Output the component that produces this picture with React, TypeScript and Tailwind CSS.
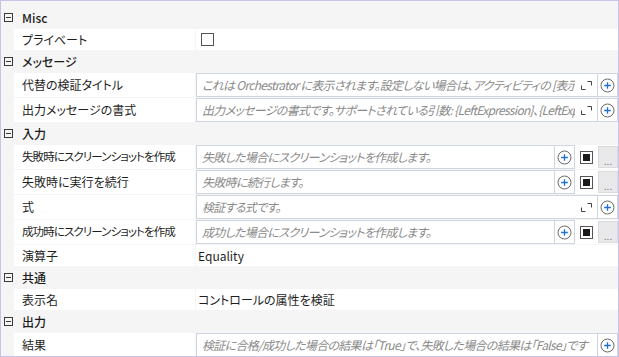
import React from "react";

function Collapse() {
  return (
    <svg width="9" height="9" viewBox="0 0 9 9" className="shrink-0">
      <rect x="0.5" y="0.5" width="8" height="8" fill="none" stroke="#3a3a3a" />
      <path d="M2 4.5H7" stroke="#3a3a3a" />
    </svg>
  );
}

function PlusCircle() {
  return (
    <svg width="15" height="15" viewBox="0 0 15 15">
      <circle cx="7.5" cy="7.5" r="6.5" fill="none" stroke="#6a6a6a" />
      <path d="M7.5 4.2V10.8M4.2 7.5H10.8" stroke="#1f6fd6" strokeWidth="1.3" />
    </svg>
  );
}

function Expand() {
  return (
    <svg width="11" height="9" viewBox="0 0 11 9">
      <path d="M0.5 4.5V8.5H4.5M6.5 0.5H10.5V4.5" fill="none" stroke="#444" />
    </svg>
  );
}

function Category({ title }: { title: string }) {
  return (
    <div className="flex h-[21px] shrink-0 items-center gap-[9px] pl-[3px]">
      <Collapse />
      <span className="font-medium text-[#1b1b1b]">{title}</span>
    </div>
  );
}

function Prop({ label, tall, long, children }: { label: string; tall?: boolean; long?: boolean; children?: React.ReactNode }) {
  return (
    <div className={`flex shrink-0 ${tall ? "h-[24px]" : "h-[21px]"}`}>
      <div
        className={`ml-[13px] flex w-[181px] shrink-0 items-center overflow-hidden whitespace-nowrap bg-white pl-[8px] text-[#1e1e1e] ${long ? "text-[11.5px] tracking-[-0.9px]" : ""}`}
      >
        {label}
      </div>
      <div className="ml-px flex min-w-0 flex-1 items-center bg-white">{children}</div>
    </div>
  );
}

function Hint({ text }: { text: string }) {
  return (
    <div className="min-w-0 flex-1 overflow-hidden whitespace-nowrap pl-[5px] italic tracking-[-0.7px] text-[#8a8a8a]">
      {text}
    </div>
  );
}

function TextBox({ text, expand }: { text: string; expand?: boolean }) {
  return (
    <div className="flex h-full min-w-0 flex-1 items-center border border-[#cfd6df]">
      <Hint text={text} />
      {expand && (
        <div className="flex w-[22px] shrink-0 items-center justify-center">
          <Expand />
        </div>
      )}
      <div className="flex h-full w-[20px] shrink-0 items-center justify-center border-l border-[#cfd6df]">
        <PlusCircle />
      </div>
    </div>
  );
}

function ShotBox({ text }: { text: string }) {
  return (
    <div className="flex h-full flex-1 items-center">
      <TextBox text={text} />
      <div className="mx-[5px] flex h-[13px] w-[13px] shrink-0 items-center justify-center border-[1.5px] border-[#555]">
        <div className="h-[7px] w-[7px] bg-[#1a1a1a]" />
      </div>
      <div className="flex h-[22px] w-[20px] shrink-0 items-end justify-center border border-[#dadada] bg-[#e9e9ec] pb-[1px] text-[10px] leading-[10px] text-[#777]">
        ...
      </div>
    </div>
  );
}

export default function App() {
  return (
    <div className="flex h-[357px] w-[619px] flex-col gap-px overflow-hidden border border-[#c9c2ea] bg-[#f5f5f5] pt-[6px] font-['Noto_Sans_CJK_JP',sans-serif] text-[12px] [font-feature-settings:'palt']">
      <Category title="Misc" />
      <Prop label="プライベート">
        <div className="ml-[5px] h-[13px] w-[13px] border border-[#555]" />
      </Prop>
      <Category title="メッセージ" />
      <Prop label="代替の検証タイトル" tall>
        <TextBox expand text="これは Orchestrator に表示されます。設定しない場合は、アクティビティの [表示名] が使用されます。" />
      </Prop>
      <Prop label="出力メッセージの書式" tall>
        <TextBox expand text="出力メッセージの書式です。サポートされている引数: {LeftExpression}、{LeftExpressionText}、{RightExpression}" />
      </Prop>
      <Category title="入力" />
      <Prop label="失敗時にスクリーンショットを作成" tall long>
        <ShotBox text="失敗した場合にスクリーンショットを作成します。" />
      </Prop>
      <Prop label="失敗時に実行を続行" tall>
        <ShotBox text="失敗時に続行します。" />
      </Prop>
      <Prop label="式" tall>
        <TextBox expand text="検証する式です。" />
      </Prop>
      <Prop label="成功時にスクリーンショットを作成" tall long>
        <ShotBox text="成功した場合にスクリーンショットを作成します。" />
      </Prop>
      <Prop label="演算子">
        <span className="pl-[2px] text-[#1e1e1e]">Equality</span>
      </Prop>
      <Category title="共通" />
      <Prop label="表示名">
        <span className="pl-[2px] text-[#1e1e1e]">コントロールの属性を検証</span>
      </Prop>
      <Category title="出力" />
      <Prop label="結果" tall>
        <TextBox text="検証に合格/成功した場合の結果は「True」で、失敗した場合の結果は「False」です" />
      </Prop>
    </div>
  );
}
